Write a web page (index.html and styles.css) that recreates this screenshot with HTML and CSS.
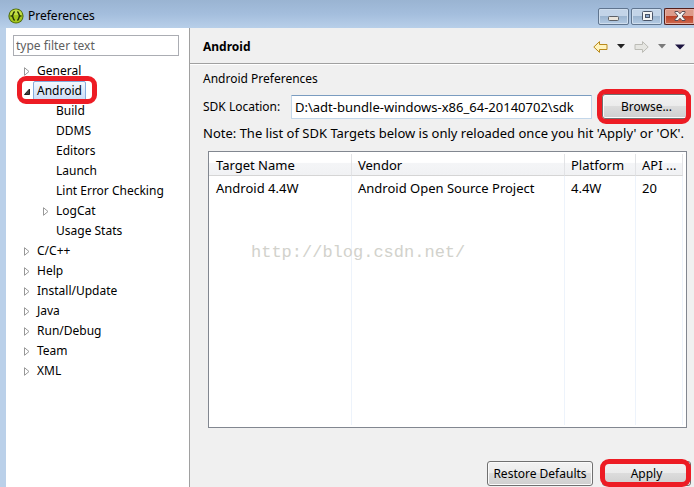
FILE: index.html
```html
<!DOCTYPE html>
<html lang="en">
<head>
    <meta charset="UTF-8">
    <meta name="viewport" content="width=device-width, initial-scale=1.0">
    <title>Preferences</title>
    <link rel="stylesheet" href="styles.css">
</head>
<body>
    <header class="titlebar">
        <svg class="logo" width="16" height="16" viewBox="0 0 16 16">
            <circle cx="8" cy="8" r="7.6" fill="#4d6b10"/>
            <circle cx="8" cy="8" r="6.6" fill="#a5c71e"/>
            <path d="M2 7a6 5.5 0 0 1 12 0z" fill="#c3dc45"/>
            <path d="M6.8 3.8C4.6 4 5.8 7.4 4 8c1.8.6.6 4 2.8 4.2M9.2 3.8C11.4 4 10.2 7.4 12 8c-1.8.6-.6 4-2.8 4.2" fill="none" stroke="#26350a" stroke-width="1.5"/>
        </svg>
        <h1>Preferences</h1>
        <div class="window-buttons">
            <button class="win" aria-label="Minimize">
                <svg width="12" height="10" viewBox="0 0 12 10"><rect x=".5" y="5.5" width="10" height="4" rx="1" fill="#e9e4dc" stroke="#5c6067"/></svg>
            </button>
            <button class="win" aria-label="Maximize">
                <svg width="12" height="10" viewBox="0 0 12 10"><rect x="1.5" y=".5" width="10" height="9" rx="1" fill="#f4f4f4" stroke="#4a5468"/><rect x="4.5" y="3.5" width="4" height="3" fill="#8fa9cc" stroke="#4a5468"/></svg>
            </button>
            <button class="win close" aria-label="Close">
                <svg width="12" height="10" viewBox="0 0 12 10"><path d="M1 .5h3l2 2.300 2-2.300h3v1L8 5l3 3.500v1H8L6 7.200 4 9.500H1v-1L4 5 1 1.500z" fill="#f4f4f4" stroke="#5a4a52"/></svg>
            </button>
        </div>
    </header>

    <div class="window">
        <nav class="sidebar">
            <input class="filter" type="text" placeholder="type filter text" aria-label="type filter text">
            <ul class="tree">
                <li><svg class="arrow" viewBox="0 0 6 9"><path d="M.5.7v7.600L5 4.500z"/></svg><a href="#">General</a></li>
                <li class="open"><svg class="arrow" viewBox="0 0 6 9"><path d="M5.500 2v5.500H.5z"/></svg><a href="#" class="selected">Android</a><span class="mark"></span></li>
                <li class="child"><a href="#">Build</a></li>
                <li class="child"><a href="#">DDMS</a></li>
                <li class="child"><a href="#">Editors</a></li>
                <li class="child"><a href="#">Launch</a></li>
                <li class="child"><a href="#">Lint Error Checking</a></li>
                <li class="child"><svg class="arrow" viewBox="0 0 6 9"><path d="M.5.7v7.600L5 4.500z"/></svg><a href="#">LogCat</a></li>
                <li class="child"><a href="#">Usage Stats</a></li>
                <li><svg class="arrow" viewBox="0 0 6 9"><path d="M.5.7v7.600L5 4.500z"/></svg><a href="#">C/C++</a></li>
                <li><svg class="arrow" viewBox="0 0 6 9"><path d="M.5.7v7.600L5 4.500z"/></svg><a href="#">Help</a></li>
                <li><svg class="arrow" viewBox="0 0 6 9"><path d="M.5.7v7.600L5 4.500z"/></svg><a href="#">Install/Update</a></li>
                <li><svg class="arrow" viewBox="0 0 6 9"><path d="M.5.7v7.600L5 4.500z"/></svg><a href="#">Java</a></li>
                <li><svg class="arrow" viewBox="0 0 6 9"><path d="M.5.7v7.600L5 4.500z"/></svg><a href="#">Run/Debug</a></li>
                <li><svg class="arrow" viewBox="0 0 6 9"><path d="M.5.7v7.600L5 4.500z"/></svg><a href="#">Team</a></li>
                <li><svg class="arrow" viewBox="0 0 6 9"><path d="M.5.7v7.600L5 4.500z"/></svg><a href="#">XML</a></li>
            </ul>
        </nav>

        <main class="page">
            <div class="page-head">
                <h2>Android</h2>
                <div class="history">
                    <button aria-label="Back"><svg width="15" height="12" viewBox="0 0 15 12"><path d="M.8 6 6.500.6v2.900h7.500v5H6.500v2.900z" fill="#fff3bd" stroke="#b98a1c"/></svg></button>
                    <button aria-label="Back history"><svg width="8" height="5" viewBox="0 0 8 5"><path d="M0 0h8L4 4.500z" fill="#222"/></svg></button>
                    <button aria-label="Forward"><svg width="15" height="12" viewBox="0 0 15 12"><path d="M14.200 6 8.500.6v2.900H1v5h7.500v2.900z" fill="#e6e6e2" stroke="#bcbcb6"/></svg></button>
                    <button aria-label="Forward history"><svg width="8" height="5" viewBox="0 0 8 5"><path d="M0 0h8L4 4.500z" fill="#7a7a7a"/></svg></button>
                    <button aria-label="Menu"><svg width="10" height="6" viewBox="0 0 10 6"><path d="M0 .5h10L5 5.500z" fill="#1c1440"/></svg></button>
                </div>
            </div>

            <div class="page-body">
                <p>Android Preferences</p>
                <div class="location">
                    <label for="sdk">SDK Location:</label>
                    <input id="sdk" type="text" value="D:\adt-bundle-windows-x86_64-20140702\sdk">
                    <div class="marked">
                        <button class="btn">Browse...</button>
                        <span class="mark"></span>
                    </div>
                </div>
                <p class="note">Note: The list of SDK Targets below is only reloaded once you hit 'Apply' or 'OK'.</p>

                <div class="targets">
                    <table>
                        <thead>
                            <tr><th class="name">Target Name</th><th>Vendor</th><th class="platform">Platform</th><th class="api">API ...</th></tr>
                        </thead>
                        <tbody>
                            <tr><td>Android 4.4W</td><td>Android Open Source Project</td><td>4.4W</td><td>20</td></tr>
                            <tr class="rest"><td></td><td></td><td></td><td></td></tr>
                        </tbody>
                    </table>
                    <span class="watermark">http://blog.csdn.net/</span>
                </div>

                <div class="actions">
                    <button class="btn restore">Restore Defaults</button>
                    <div class="marked">
                        <button class="btn">Apply</button>
                        <span class="mark"></span>
                    </div>
                </div>
            </div>
        </main>
    </div>
</body>
</html>
```
FILE: styles.css
```css
* {
    box-sizing: border-box;
}
body {
    margin: 0;
    min-height: 100vh;
    display: flex;
    flex-direction: column;
    background-color: #bad0e9;
    color: #000;
    font-family: "Noto Sans", "Open Sans", sans-serif;
    font-size: 12px;
    line-height: 20px;
}
h1, h2, p, ul {
    margin: 0;
    padding: 0;
}
input, button {
    font: inherit;
    color: inherit;
    margin: 0;
}
a {
    color: inherit;
    text-decoration: none;
}

/* title bar */
.titlebar {
    display: flex;
    align-items: center;
    height: 28px;
    padding: 4px 0 0 8px;
    gap: 4px;
    background: linear-gradient(#9ab4d2, #a4bedd 50%, #b8cfe9);
}
.titlebar h1 {
    flex: 1;
    font-size: 12px;
    font-weight: normal;
}
.window-buttons {
    display: flex;
    gap: 2px;
}
.win {
    display: flex;
    align-items: center;
    justify-content: center;
    width: 31px;
    height: 17px;
    padding: 0;
    border: 1px solid #60758f;
    border-radius: 2px;
    background: linear-gradient(#c3d4e8 45%, #9cb5d0 50%, #b4cbe4);
    box-shadow: inset 0 0 0 1px #cfdeee;
}
.close {
    width: 30px;
    border-color: #54201c;
    border-right: 0;
    border-radius: 2px 0 0 2px;
    background: linear-gradient(#dc9a8a 45%, #bd4228 50%, #cf6a50);
    box-shadow: inset 0 0 0 1px #e5b0a4;
}

.window {
    flex: 1;
    display: flex;
    margin-left: 6px;
}

/* left tree */
.sidebar {
    flex: none;
    width: 184px;
    padding: 7px 10px 0 7px;
    background-color: #fff;
    border-right: 1px solid #a0a0a0;
}
.filter {
    display: block;
    width: 100%;
    height: 21px;
    padding: 0 2px;
    border: 1px solid #abadb3;
    outline: none;
}
.filter::placeholder {
    color: #606060;
    opacity: 1;
}
.tree {
    margin-top: 5px;
    list-style: none;
}
.tree li {
    position: relative;
    display: flex;
    align-items: center;
    height: 20px;
    padding-left: 24px;
}
.tree .child {
    padding-left: 43px;
}
.arrow {
    width: 6px;
    height: 9px;
    margin: 0 7px 0 -13px;
    fill: #fff;
    stroke: #989898;
}
.open .arrow {
    fill: #404040;
    stroke: #222;
}
.selected {
    margin: 0 -4px;
    padding: 0 3px;
    border: 1px solid #84acdd;
    border-radius: 2px;
    line-height: 18px;
    background: linear-gradient(#f4f8fd, #c9dcf6);
}

/* red rings round the things to click */
.mark {
    position: absolute;
    inset: -5px 0 -5px -5px;
    border: 5px solid #ed1c24;
    border-radius: 9px;
    pointer-events: none;
}
.tree .mark {
    inset: -5px auto -3px 4px;
    width: 80px;
}
.actions .mark {
    inset: -2px 0 -1px -2px;
}
.marked {
    position: relative;
    width: 89px;
}
.marked .btn {
    width: 100%;
}

/* right page */
.page {
    flex: 1;
    display: flex;
    flex-direction: column;
    background-color: #f0f0f0;
}
.page-head {
    display: flex;
    align-items: center;
    justify-content: space-between;
    height: 36px;
    padding: 2px 9px 0 13px;
    border-bottom: 1px solid #a0a0a0;
    box-shadow: 0 1px #fff;
}
.page-head h2 {
    font-size: 12px;
}
.history {
    display: flex;
    align-items: center;
    gap: 9px;
}
.history button {
    display: flex;
    padding: 0;
    border: 0;
    background: none;
}
.page-body {
    flex: 1;
    display: flex;
    flex-direction: column;
    padding: 5px 3px 1px 13px;
}
.location {
    display: flex;
    align-items: center;
    margin: 5px 0 4px;
}
.location label {
    width: 88px;
}
.location input {
    flex: 1;
    min-width: 0;
    height: 24px;
    margin-right: 10px;
    padding: 0 3px;
    border: 1px solid #c3d7ea;
    border-top-color: #7a9cc0;
    border-radius: 1px;
    background-color: #fff;
}
.location input, .note, .targets {
    font-size: 13px;
}
.note {
    white-space: nowrap;
}
.btn {
    height: 25px;
    padding: 0;
    border: 1px solid #707070;
    border-radius: 3px;
    background: linear-gradient(#f2f2f2, #ebebeb 49%, #dcdcdc 50%, #cfcfcf);
    box-shadow: inset 0 0 0 1px #fafafa;
}
.targets {
    position: relative;
    flex: 1;
    display: flex;
    margin: 8px 4px 0 5px;
    padding: 2px 3px 2px 0;
    border: 1px solid #828790;
    background-color: #fff;
}
.targets table {
    width: 100%;
    table-layout: fixed;
    border-collapse: separate;
    border-spacing: 0;
}
.targets th, .targets td {
    height: 24px;
    padding: 0 0 0 6px;
    border-right: 1px solid #edf3fb;
    text-align: left;
    white-space: nowrap;
}
.targets th {
    height: 22px;
    font-weight: normal;
    border-right-color: #e2e3e6;
    border-bottom: 1px solid #d5d5d5;
    background: linear-gradient(#fff 40%, #f4f5f7 45%, #f1f2f4);
}
.targets th:first-child, .targets td:first-child {
    padding-left: 7px;
}
.targets .name {
    width: 143px;
}
.targets .platform {
    width: 71px;
}
.targets .api {
    width: 47px;
}
.targets .rest td {
    height: 100%;
}
.watermark {
    position: absolute;
    left: 42px;
    top: 91px;
    color: #d2d2cc;
    font-family: "Liberation Mono", monospace;
    font-size: 17px;
}
.actions {
    display: flex;
    justify-content: flex-end;
    gap: 9px;
    margin-top: 33px;
}
.restore {
    width: 106px;
}
```
